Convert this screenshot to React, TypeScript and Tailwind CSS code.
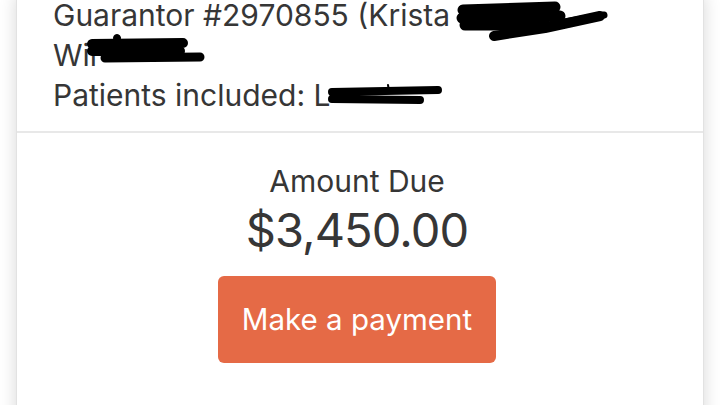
const Redactions = () => (
  <svg
    className="pointer-events-none absolute left-0 top-0"
    width="720"
    height="140"
    viewBox="0 0 720 140"
    fill="none"
  >
    <g stroke="#000" strokeLinecap="round" strokeLinejoin="round">
      {/* line 1 */}
      <path d="M463 10 L555 7 M462 18 L560 16 M465 25 L545 25" strokeWidth="11" />
      <path d="M494 36 L545 28 L600 16" strokeWidth="10" />
      <path d="M520 30 L604 15" strokeWidth="7" />
      {/* line 2 */}
      <path d="M92 44 L183 43 M92 51 L180 51" strokeWidth="10" />
      <path d="M105 58 L200 57" strokeWidth="9" />
      <circle cx="117" cy="38" r="3.5" fill="#000" />
      {/* line 3 */}
      <path d="M332 92 L438 90 M332 99 L420 100" strokeWidth="8" />
      <path d="M388 85 L389 91" strokeWidth="2" />
    </g>
  </svg>
);

export default function App() {
  return (
    <div
      className="relative h-[405px] w-[720px] overflow-hidden bg-white px-4 text-[#363636]"
      style={{ fontFamily: 'Inter, "Noto Sans", sans-serif' }}
    >
      <div className="h-[440px] border-x border-[#e2e2e2] bg-white shadow-[0_0_16px_rgba(0,0,0,0.16)]">
        <div className="border-b-2 border-[#e8e8e8] pb-[16px] pl-[36px]">
          <div className="mt-[-5px] text-[30px] leading-[40px]">
            <p>Guarantor #2970855 (Krista</p>
            <p>Wil</p>
            <p>Patients included: L</p>
          </div>
        </div>
        <div className="flex flex-col items-center pr-[6px] pt-[28px]">
          <p className="text-[30px] leading-[40px]">Amount Due</p>
          <p className="mt-[5px] text-[47px] leading-[48px] tracking-[-0.9px]">$3,450.00</p>
          <button className="mt-[22px] h-[87px] w-[278px] rounded-md bg-[#e56a46] text-[29.5px] text-white">
            Make a payment
          </button>
        </div>
      </div>
      <Redactions />
    </div>
  );
}
